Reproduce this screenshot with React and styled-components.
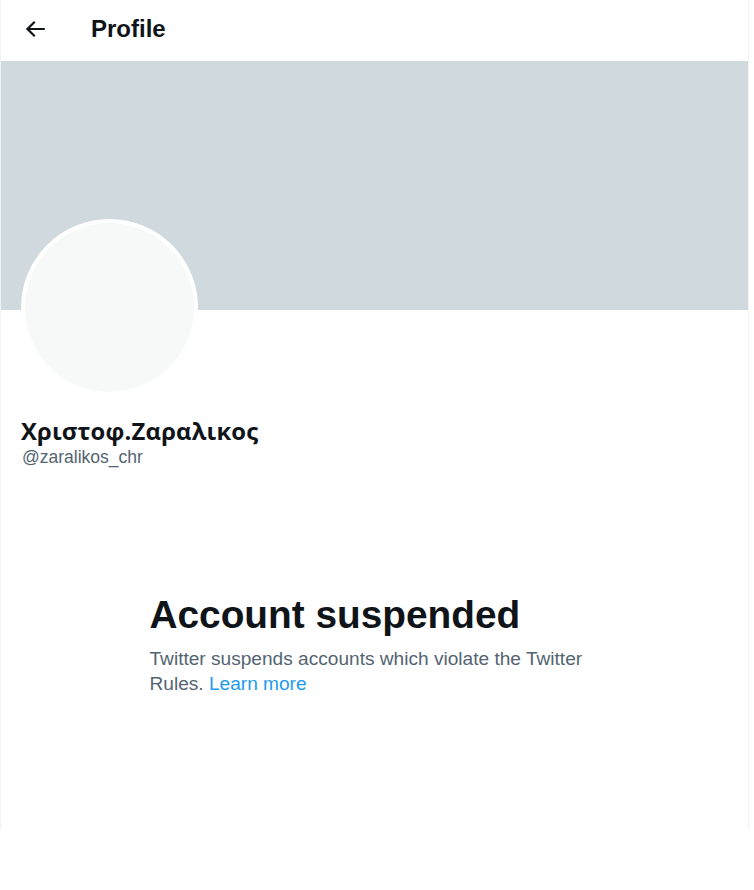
import React from "react";
import styled, { createGlobalStyle } from "styled-components";

const Global = createGlobalStyle`
  html, body { margin: 0; padding: 0; background: #ffffff; }
  body { font-family: "Liberation Sans", Arial, sans-serif; color: #0f1419; }
`;

const Column = styled.main`
  width: 747px;
  min-height: 829px;
  border-left: 1px solid #eff3f4;
  border-right: 1px solid #eff3f4;
  display: flex;
  flex-direction: column;
  background: #ffffff;
`;

const Header = styled.header`
  height: 57px;
  padding-bottom: 4px;
  display: flex;
  align-items: center;
  padding-left: 20px;
  gap: 43px;
`;

const BackButton = styled.button`
  width: 27px;
  height: 27px;
  padding: 0;
  border: 0;
  background: none;
  display: flex;
  align-items: center;
  justify-content: center;
  color: #0f1419;
  cursor: pointer;
`;

const Title = styled.h1`
  margin: 0;
  font-size: 24px;
  font-weight: 700;
  line-height: 28px;
`;

const Banner = styled.div`
  height: 249px;
  background: #cfd9de;
`;

const ProfileBlock = styled.section`
  padding: 0 20px;
  display: flex;
  flex-direction: column;
`;

const Avatar = styled.div`
  width: 169px;
  height: 169px;
  margin-top: -91px;
  border-radius: 50%;
  border: 4px solid #ffffff;
  background: #f7f9f9;
`;

const Name = styled.div`
  margin-top: 21px;
  font-family: "Open Sans", "DejaVu Sans", sans-serif;
  font-size: 23.8px;
  font-weight: 700;
  line-height: 29px;
  letter-spacing: 0.2px;
`;

const Handle = styled.div`
  font-size: 17.5px;
  line-height: 23px;
  color: #536471;
  padding-left: 1px;
`;

const Suspended = styled.section`
  width: 450px;
  margin: 123px auto 0;
  display: flex;
  flex-direction: column;
`;

const Heading = styled.h2`
  margin: 0;
  font-size: 38.8px;
  font-weight: 700;
  line-height: 46px;
  color: #0f1419;
`;

const Body = styled.p`
  margin: 8px 0 0;
  font-size: 19.1px;
  line-height: 25px;
  color: #536471;
`;

const Link = styled.a`
  color: #1d9bf0;
  text-decoration: none;
`;

export default function App() {
  return (
    <>
      <Global />
      <Column>
        <Header>
          <BackButton aria-label="Back">
            <svg width="26" height="26" viewBox="0 0 24 24" fill="currentColor">
              <path d="M7.414 13l5.043 5.04-1.414 1.42L3.586 12l7.457-7.46 1.414 1.42L7.414 11H21v2H7.414z" />
            </svg>
          </BackButton>
          <Title>Profile</Title>
        </Header>
        <Banner />
        <ProfileBlock>
          <Avatar />
          <Name>Χριστοφ.Ζαραλικος</Name>
          <Handle>@zaralikos_chr</Handle>
        </ProfileBlock>
        <Suspended>
          <Heading>Account suspended</Heading>
          <Body>
            Twitter suspends accounts which violate the Twitter Rules.{" "}
            <Link href="#">Learn more</Link>
          </Body>
        </Suspended>
      </Column>
    </>
  );
}
